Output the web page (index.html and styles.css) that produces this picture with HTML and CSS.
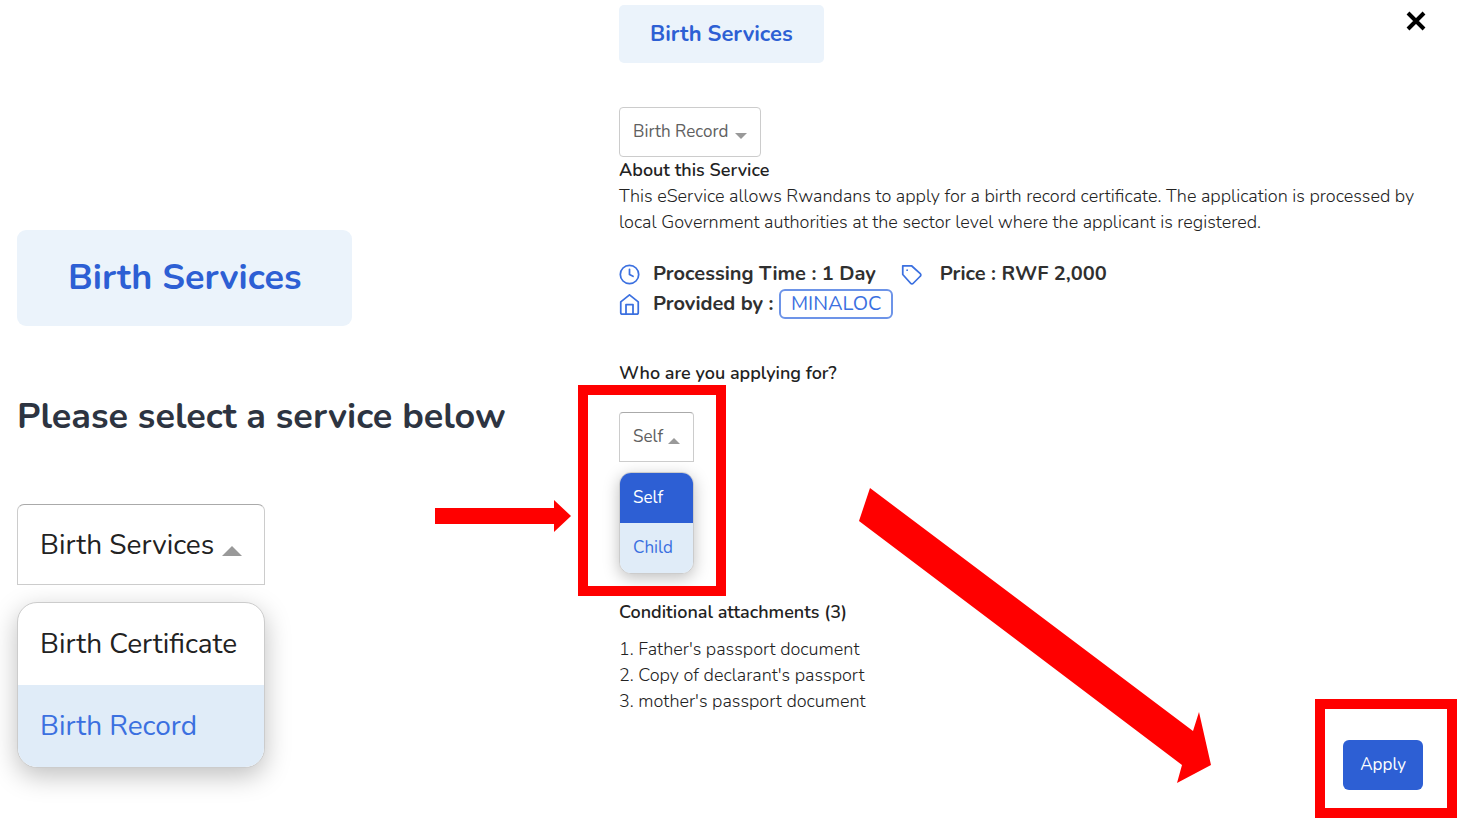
FILE: index.html
```html
<!DOCTYPE html>
<html lang="en">
<head>
    <meta charset="UTF-8">
    <title>Birth Services</title>
    <link rel="stylesheet" href="styles.css">
</head>
<body>
<main class="page">
    <section class="chooser">
        <h1 class="badge badge_large">Birth Services</h1>
        <h2><label for="service">Please select a service below</label></h2>
        <div class="picker picker_large">
            <div class="select_box open">
                <select id="service">
                    <option>Birth Services</option>
                    <option>Birth Certificate</option>
                    <option>Birth Record</option>
                </select>
                <span class="caret"></span>
            </div>
            <ul class="menu" role="listbox" aria-label="Services">
                <li role="option">Birth Certificate</li>
                <li role="option" class="hover">Birth Record</li>
            </ul>
        </div>
    </section>

    <section class="details">
        <header>
            <h1 class="badge">Birth Services</h1>
            <button class="close" aria-label="Close">
                <svg viewBox="0 0 20 20" width="20" height="20"><path d="M2 2L18 18M18 2L2 18"/></svg>
            </button>
        </header>
        <div class="picker picker_record">
            <div class="select_box">
                <select id="record" aria-label="Service">
                    <option>Birth Record</option>
                    <option>Birth Certificate</option>
                </select>
                <span class="caret"></span>
            </div>
        </div>
        <h3>About this Service</h3>
        <p class="about">This eService allows Rwandans to apply for a birth record certificate. The application is processed by local Government authorities at the sector level where the applicant is registered.</p>

        <div class="facts">
            <div class="fact">
                <svg class="icon" viewBox="0 0 24 24"><circle cx="12" cy="12" r="10.5"/><path d="M12 6v6l4 2"/></svg>
                <span>Processing Time : 1 Day</span>
            </div>
            <div class="fact fact_price">
                <svg class="icon" viewBox="0 0 24 24"><path d="M2 2h10l10 9a2 2 0 0 1 0 3l-8 8a2 2 0 0 1-3 0L2 12z"/><path d="M7 7h.01"/></svg>
                <span>Price : RWF 2,000</span>
            </div>
            <div class="fact provider">
                <svg class="icon" viewBox="0 0 24 24"><path d="M2 9l10-8 10 8v12a2 2 0 0 1-2 2H4a2 2 0 0 1-2-2z"/><path d="M8 23V12h8v11"/></svg>
                <span>Provided by : <a href="#">MINALOC</a></span>
            </div>
        </div>

        <h3 class="question"><label for="applicant">Who are you applying for?</label></h3>
        <div class="picker picker_applicant">
            <div class="select_box open">
                <select id="applicant">
                    <option>Self</option>
                    <option>Child</option>
                </select>
                <span class="caret"></span>
            </div>
            <ul class="menu" role="listbox" aria-label="Applicant">
                <li role="option" class="selected" aria-selected="true">Self</li>
                <li role="option" class="hover">Child</li>
            </ul>
            <span class="frame"></span>
            <svg class="arrow" viewBox="0 0 136 32"><path d="M0 8H119V0L136 16L119 32V24H0z"/></svg>
            <svg class="arrow_long" viewBox="0 0 352 295"><path d="M11 0L334 243L340 224L352 277L318 295L323 277L0 33z"/></svg>
        </div>

        <div class="bottom">
            <div class="attachments">
                <h3>Conditional attachments (3)</h3>
                <ol>
                    <li>Father's passport document</li>
                    <li>Copy of declarant's passport</li>
                    <li>mother's passport document</li>
                </ol>
            </div>
            <div class="action">
                <button class="apply">Apply</button>
                <span class="frame"></span>
            </div>
        </div>
    </section>
</main>
</body>
</html>
```
FILE: styles.css
```css
* {
    box-sizing: border-box;
}
body {
    margin: 0;
    font-family: Nunito, Lato, "Open Sans", sans-serif;
    font-size: 18px;
    font-weight: 300;
    line-height: 26px;
    color: #222;
    background: #fff;
}
h1, h2, h3, p, ul, ol {
    margin: 0;
    padding: 0;
}
button, select {
    font: inherit;
}
.page {
    display: grid;
    grid-template-columns: 47fr 63fr;
    min-height: 100vh;
    padding: 0 35px 0 17px;
}
.chooser {
    padding-top: 230px;
}
.badge {
    width: max-content;
    padding: 16px 31px;
    border-radius: 5px;
    font-size: 22px;
    font-weight: 700;
    color: #2d5fd4;
    background: #ebf3fb;
}
.badge_large {
    padding: 24px 51px;
    border-radius: 9px;
    font-size: 36px;
    line-height: 48px;
}
h2 {
    margin: 68px 0 64px;
    font-size: 36px;
    font-weight: 700;
    line-height: 46px;
    color: #2d3441;
}
h3 {
    font-size: 18px;
    font-weight: 600;
    color: #222;
}

/* select boxes and their open menus */
.picker {
    position: relative;
    font-size: 17px;
    font-weight: 400;
}
.picker_large {
    width: 248px;
    font-size: 28px;
}
.picker_record {
    width: 142px;
    margin-top: 44px;
}
.picker_applicant {
    width: 75px;
    margin-top: 26px;
}
.select_box {
    position: relative;
}
select {
    display: block;
    width: 100%;
    height: 50px;
    padding: 0 13px;
    border: 1px solid #ccc;
    border-radius: 4px;
    appearance: none;
    color: #606060;
    background: #fff;
}
.open select {
    border-top-color: #aaa;
    border-radius: 4px 4px 0 0;
}
.picker_large select {
    height: 81px;
    padding: 0 22px;
    border-radius: 7px 7px 0 0;
    color: #222;
}
.caret {
    position: absolute;
    top: 26px;
    right: 14px;
    border: solid transparent;
    border-width: 6px 6px 0;
    border-top-color: #999;
    pointer-events: none;
}
.open .caret {
    border-width: 0 6px 6px;
    border-bottom-color: #999;
}
.picker_large .caret {
    top: 42px;
    right: 23px;
    border-width: 0 10px 10px;
}
.menu {
    margin-top: 10px;
    overflow: hidden;
    border: 1px solid #ccc;
    border-radius: 12px;
    list-style: none;
    white-space: nowrap;
    background: #fff;
    box-shadow: 0 4px 16px rgba(0, 0, 0, 0.25);
}
.menu li {
    padding: 12px 13px;
}
.picker_large .menu {
    margin-top: 17px;
    border-radius: 20px;
    box-shadow: 0 8px 26px rgba(0, 0, 0, 0.25);
}
.picker_large .menu li {
    padding: 20px 22px;
    line-height: 42px;
}
.menu .hover {
    color: #3b70e0;
    background: #e0ecf8;
}
.menu .selected {
    color: #fff;
    background: #2d5fd4;
}

.details header {
    display: flex;
    justify-content: space-between;
    align-items: flex-start;
    padding-top: 5px;
}
.close {
    display: flex;
    margin-top: 6px;
    padding: 0;
    border: 0;
    background: none;
    cursor: pointer;
}
.close path {
    fill: none;
    stroke: #000;
    stroke-width: 4;
}
.about {
    max-width: 800px;
}

.facts {
    display: flex;
    flex-wrap: wrap;
    column-gap: 25px;
    margin-top: 24px;
    font-size: 20px;
    font-weight: 700;
    line-height: 30px;
    color: #303030;
}
.fact {
    display: flex;
    align-items: center;
    gap: 13px;
}
.fact_price {
    gap: 18px;
}
.provider {
    width: 100%;
}
.icon {
    width: 21px;
    height: 21px;
    fill: none;
    stroke: #3b70e0;
    stroke-width: 2;
    stroke-linecap: round;
    stroke-linejoin: round;
}
.fact a {
    display: inline-block;
    padding: 0 10px;
    border: 2px solid #6d94e8;
    border-radius: 6px;
    font-weight: 400;
    line-height: 26px;
    text-decoration: none;
    color: #3b70e0;
}
.question {
    margin-top: 41px;
}

.bottom {
    display: flex;
    justify-content: space-between;
    align-items: flex-start;
    margin-top: 25px;
}
.attachments ol {
    margin-top: 11px;
    list-style-position: inside;
}
.action {
    position: relative;
    margin: 141px 3px 0 0;
}
.apply {
    display: block;
    height: 50px;
    padding: 0 17px;
    border: 0;
    border-radius: 6px;
    font-size: 17px;
    font-weight: 400;
    color: #fff;
    background: #2d5fd4;
    cursor: pointer;
}

/* red marks drawn over the screens */
.frame {
    position: absolute;
    inset: -27px -32px -22px -41px;
    border: 10px solid #f00;
    pointer-events: none;
}
.action .frame {
    inset: -41px -34px -28px -28px;
}
.arrow, .arrow_long {
    position: absolute;
    fill: #f00;
    pointer-events: none;
}
.arrow {
    top: 88px;
    left: -184px;
    width: 136px;
}
.arrow_long {
    top: 76px;
    left: 240px;
    width: 352px;
}
```
